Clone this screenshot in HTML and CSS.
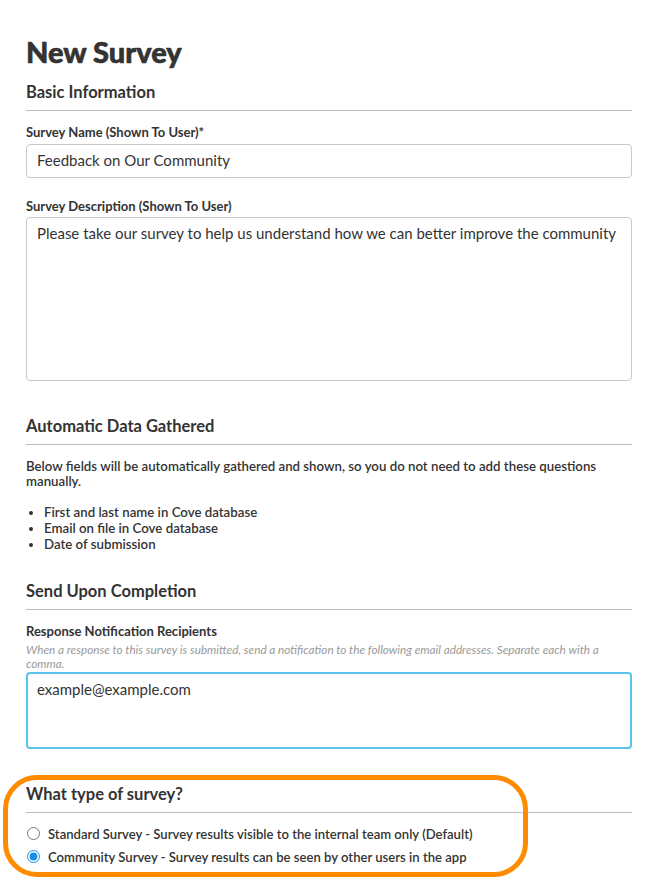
FILE: index.html
```html
<!DOCTYPE html>
<html lang="en">
<head>
    <meta charset="UTF-8">
    <meta name="viewport" content="width=device-width, initial-scale=1.0">
    <title>New Survey</title>
    <link rel="stylesheet" href="styles.css">
</head>
<body>
<div class="page">
    <h1 class="title">New Survey</h1>

    <div class="section first">
        <h2 class="sectionTitle">Basic Information</h2>
        <label class="fieldLabel" for="surveyName">Survey Name (Shown To User)*</label>
        <input class="textInput" id="surveyName" type="text" value="Feedback on Our Community">
        <label class="fieldLabel second" for="surveyDesc">Survey Description (Shown To User)</label>
        <textarea class="textBox tall" id="surveyDesc">Please take our survey to help us understand how we can better improve the community</textarea>
    </div>

    <div class="section">
        <h2 class="sectionTitle">Automatic Data Gathered</h2>
        <p class="note">Below fields will be automatically gathered and shown, so you do not need to add these questions manually.</p>
        <ul class="autoList">
            <li>First and last name in Cove database</li>
            <li>Email on file in Cove database</li>
            <li>Date of submission</li>
        </ul>
    </div>

    <div class="section send">
        <h2 class="sectionTitle">Send Upon Completion</h2>
        <label class="fieldLabel recipients" for="recipients">Response Notification Recipients</label>
        <p class="hint">When a response to this survey is submitted, send a notification to the following email addresses. Separate each with a comma.</p>
        <textarea class="textBox short focused" id="recipients">example@example.com</textarea>
    </div>

    <div class="section typeSection">
        <div class="highlight"></div>
        <h2 class="sectionTitle">What type of survey?</h2>
        <div class="radioList">
            <label class="radioRow"><input type="radio" name="surveyType"> Standard Survey - Survey results visible to the internal team only (Default)</label>
            <label class="radioRow"><input type="radio" name="surveyType" checked> Community Survey - Survey results can be seen by other users in the app</label>
        </div>
    </div>
</div>
</body>
</html>
```

FILE: styles.css
```css
body{
    margin: 0;
    background-color: #fff;
    color: #333;
    font-family: Lato, "Noto Sans", sans-serif;
}
.page{
    width: 606px;
    padding: 0 0 60px 26px;
}
.title{
    margin: 0;
    padding-top: 34px;
    font-size: 29px;
    line-height: 36px;
    font-weight: 900;
    color: #333;
    -webkit-text-stroke: 0.6px #333;
}
.section{
    position: relative;
    margin-top: 35px;
}
.section.first{
    margin-top: 12px;
}
.section.send{
    margin-top: 29px;
}
.sectionTitle{
    margin: 0;
    padding-bottom: 8px;
    font-size: 16.5px;
    line-height: 20px;
    font-weight: 700;
    border-bottom: 1px solid #bdbdbd;
}
.fieldLabel{
    display: block;
    margin-top: 13px;
    margin-bottom: 4px;
    font-size: 13px;
    line-height: 16px;
    font-weight: 700;
}
.fieldLabel.second{
    margin-top: 20px;
    margin-bottom: 3px;
}
.fieldLabel.recipients{
    margin-top: 13px;
    margin-bottom: 0;
}
.textInput,
.textBox{
    display: block;
    box-sizing: border-box;
    width: 100%;
    margin: 0;
    padding: 6px 10px;
    border: 1px solid #c8c8c8;
    border-radius: 4px;
    font-family: inherit;
    font-size: 15px;
    line-height: 20px;
    color: #333;
    background: #fff;
    resize: none;
    outline: none;
}
.textInput{
    height: 34px;
    padding: 5px 10px 7px;
}
.textBox.tall{
    height: 164px;
    padding-top: 5px;
}
.textBox.short{
    height: 77px;
    margin-top: 1px;
}
.textBox.focused{
    border: 2px solid #5ac3ea;
    padding: 5px 9px;
}
.note{
    margin: 14px 0 0;
    font-size: 13.25px;
    line-height: 15px;
    font-weight: 600;
}
.autoList{
    margin: 15px 0 0;
    padding-left: 18px;
    font-size: 13.25px;
    line-height: 16px;
    font-weight: 600;
}
.hint{
    margin: 4px 0 0;
    font-size: 11.75px;
    line-height: 14px;
    font-style: italic;
    color: #9a9a9a;
}
.radioList{
    margin-top: 9px;
}
.radioRow{
    display: flex;
    align-items: center;
    height: 23px;
    font-size: 13.1px;
    font-weight: 600;
}
.radioRow input{
    width: 13px;
    height: 13px;
    margin: 0 8px 0 1px;
    accent-color: #1a8ee4;
}
/* orange ring drawn over the survey type block */
.highlight{
    position: absolute;
    top: -9px;
    left: -23px;
    width: 525px;
    height: 102px;
    box-sizing: border-box;
    border: 5px solid #ff8c00;
    border-radius: 34px;
    pointer-events: none;
}
```
